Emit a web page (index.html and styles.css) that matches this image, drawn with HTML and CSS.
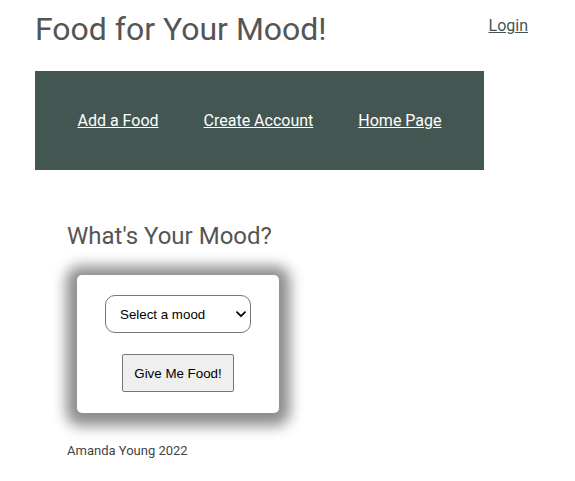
FILE: index.html
```html
<!DOCTYPE html>
<html lang="en">
<head>
<meta charset="utf-8">
<title>Food for Your Mood!</title>
<link rel="stylesheet" href="styles.css">
</head>
<body>
<header class="top">
  <h1 class="title">Food for Your Mood!</h1>
  <a class="login" href="#">Login</a>
</header>
<nav class="nav">
  <a href="#">Add a Food</a>
  <a href="#">Create Account</a>
  <a href="#">Home Page</a>
</nav>
<main class="main">
  <h2 class="mood-title">What's Your Mood?</h2>
  <form class="card">
    <span class="select-wrap">
      <select class="select">
        <option>Select a mood</option>
        <option>Happy</option>
        <option>Sad</option>
      </select>
      <svg class="chev" width="10" height="7" viewBox="0 0 10 7"><path d="M1 1.2 L5 5.2 L9 1.2" fill="none" stroke="#000" stroke-width="1.8" stroke-linecap="round" stroke-linejoin="round"/></svg>
    </span>
    <button type="button" class="btn">Give Me Food!</button>
  </form>
  <footer class="foot">Amanda Young 2022</footer>
</main>
</body>
</html>
```
FILE: styles.css
```css
html, body {
  margin: 0;
  padding: 0;
  background: #fff;
  font-family: Roboto, "Liberation Sans", sans-serif;
}
.top {
  display: flex;
  align-items: flex-start;
  padding: 11px 47px 0 35px;
}
.title {
  margin: 0;
  flex: 1;
  font-size: 32px;
  font-weight: 400;
  line-height: 37px;
  color: #555;
}
.login {
  margin-top: 5px;
  font-size: 16px;
  line-height: 19px;
  color: #435651;
}
.nav {
  margin: 23px 0 0 35px;
  width: 449px;
  height: 99px;
  background: #435651;
  display: flex;
  justify-content: center;
  align-items: center;
  gap: 45px;
}
.nav a {
  color: #fff;
  font-size: 16px;
  line-height: 20px;
}
.main {
  padding: 52px 0 0 67px;
}
.mood-title {
  margin: 0;
  font-size: 24px;
  font-weight: 400;
  line-height: 28px;
  color: #555;
}
.card {
  margin: 25px 0 0 10px;
  width: 202px;
  height: 138px;
  box-sizing: border-box;
  background: #fff;
  border-radius: 5px;
  box-shadow: 0 2px 14px 11px rgba(0, 0, 0, 0.45);
  display: flex;
  flex-direction: column;
  align-items: center;
  padding-top: 20px;
  gap: 21px;
}
.select-wrap {
  position: relative;
  display: block;
}
.select {
  appearance: none;
  -webkit-appearance: none;
  width: 146px;
  height: 38px;
  border: 1px solid #767676;
  border-radius: 10px;
  background: #fff;
  padding: 0 0 0 14px;
  font-family: "Liberation Sans", Arial, sans-serif;
  font-size: 13.33px;
  color: #000;
}
.chev {
  position: absolute;
  right: 5px;
  top: 16px;
  pointer-events: none;
}
.btn {
  width: 112px;
  height: 38px;
  border: 1px solid #767676;
  border-radius: 2px;
  background: #efefef;
  font-family: "Liberation Sans", Arial, sans-serif;
  font-size: 13.33px;
  color: #000;
  padding: 0;
}
.foot {
  margin-top: 30px;
  font-size: 13px;
  line-height: 15px;
  color: #444;
}
```
